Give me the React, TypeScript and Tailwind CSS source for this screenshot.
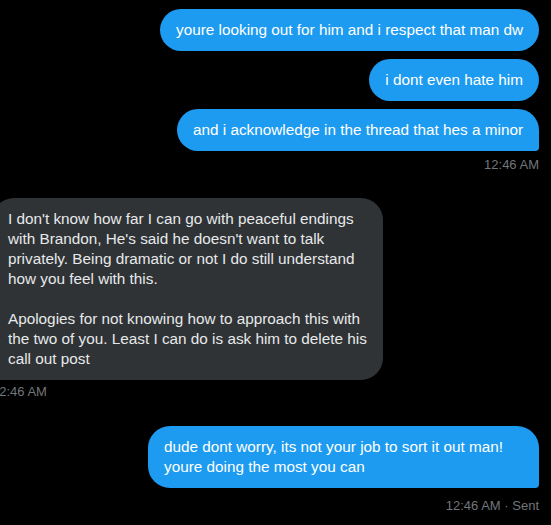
import React from 'react';

type Message = {
  id: number;
  text: string;
  mine: boolean;
  last?: boolean;
  wrapped?: boolean;
};

const Bubble: React.FC<{ message: Message }> = ({ message }) => {
  const shape = message.mine
    ? message.last
      ? 'rounded-[22px] rounded-br-[4px]'
      : 'rounded-[22px]'
    : 'rounded-[22px] rounded-bl-[4px]';
  return (
    <div
      className={`${shape} ${message.wrapped ? 'w-[391px]' : 'max-w-[391px]'} px-4 py-[11px] text-[15.3px] leading-5 whitespace-pre ${
        message.mine ? 'bg-[#1d9bf0] text-white' : 'bg-[#2f3336] text-[#e7e9ea]'
      }`}
    >
      {message.text}
    </div>
  );
};

const Stamp: React.FC<{ children: React.ReactNode; right?: boolean }> = ({ children, right }) => (
  <div className={`text-[13px] leading-4 text-[#71767b] ${right ? 'text-right' : ''}`}>{children}</div>
);

export default function App() {
  return (
    <div
      className="w-[551px] h-[525px] overflow-hidden bg-black pt-[9px] pr-3"
      style={{ fontFamily: '"Liberation Sans", Arial, sans-serif' }}
    >
      <div className="flex flex-col items-end gap-2">
        <Bubble message={{ id: 1, text: 'youre looking out for him and i respect that man dw', mine: true }} />
        <Bubble message={{ id: 2, text: 'i dont even hate him', mine: true }} />
        <Bubble message={{ id: 3, text: 'and i acknowledge in the thread that hes a minor', mine: true, last: true }} />
      </div>
      <div className="mt-[6px]">
        <Stamp right>12:46 AM</Stamp>
      </div>

      <div className="-ml-2 mt-[25px] flex flex-col items-start">
        <Bubble
          message={{
            id: 4,
            mine: false,
            wrapped: true,
            text:
              "I don't know how far I can go with peaceful endings\nwith Brandon, He's said he doesn't want to talk\nprivately. Being dramatic or not I do still understand\nhow you feel with this.\n\nApologies for not knowing how to approach this with\nthe two of you. Least I can do is ask him to delete his\ncall out post",
          }}
        />
        <div className="mt-1">
          <Stamp>12:46 AM</Stamp>
        </div>
      </div>

      <div className="mt-[26px] flex flex-col items-end">
        <Bubble
          message={{
            id: 5,
            mine: true,
            last: true,
            wrapped: true,
            text: 'dude dont worry, its not your job to sort it out man!\nyoure doing the most you can',
          }}
        />
        <div className="mt-[10px] w-full">
          <Stamp right>12:46 AM · Sent</Stamp>
        </div>
      </div>
    </div>
  );
}
